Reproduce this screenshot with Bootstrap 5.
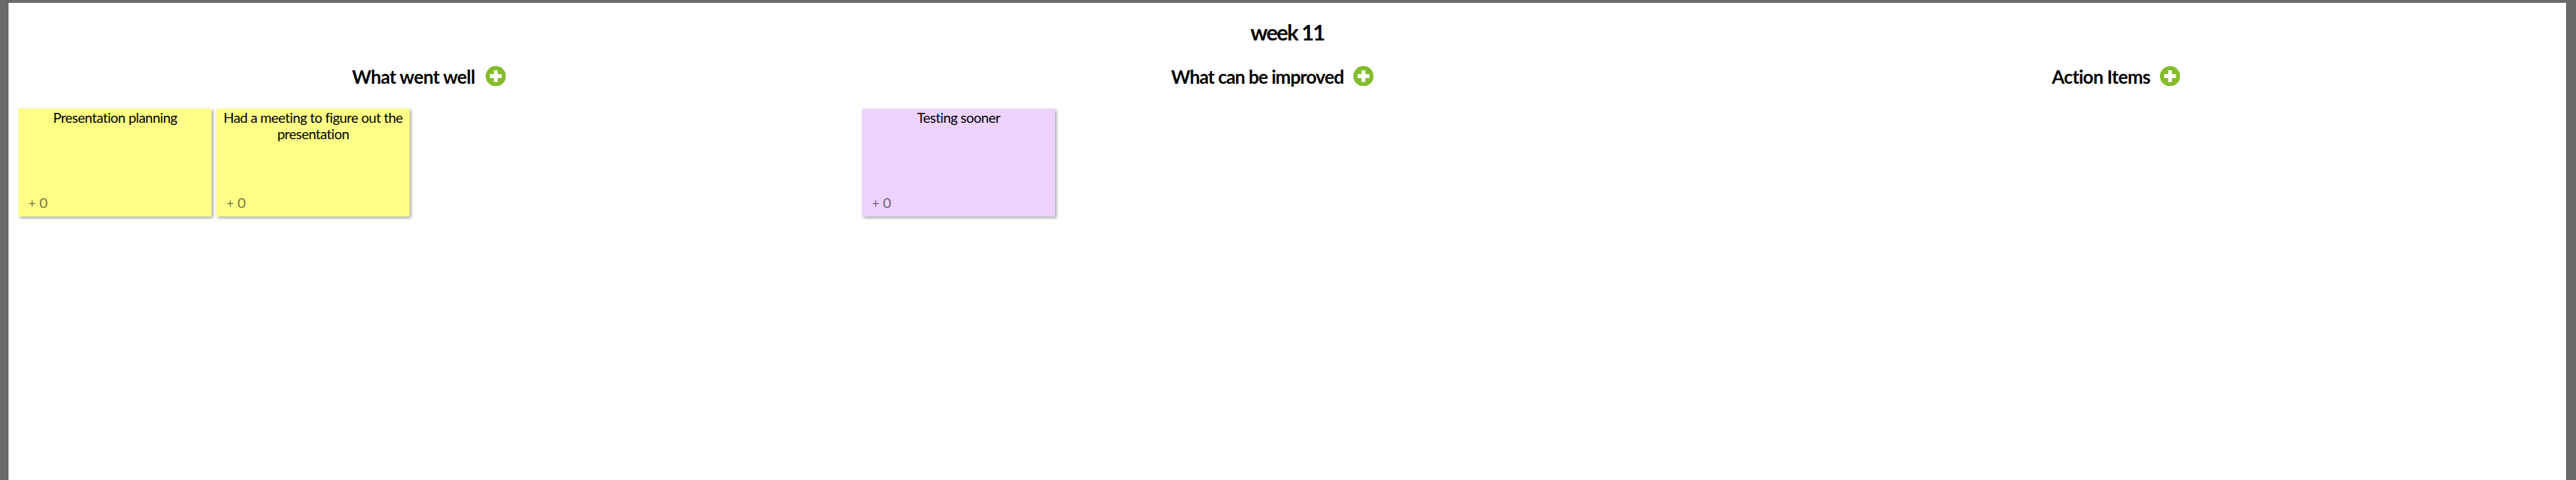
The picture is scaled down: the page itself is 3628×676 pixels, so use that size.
<!DOCTYPE html>
<html lang="en">
<head>
<meta charset="utf-8">
<title>week 11</title>
<link href="https://cdn.jsdelivr.net/npm/bootstrap@5.3.0/dist/css/bootstrap.min.css" rel="stylesheet">
<style>
body{background:#696969;font-family:Lato,"Open Sans",sans-serif;color:#000}
.board{height:676px;padding:4px 14px 0 12px}
.board-title{font-size:30.5px;font-weight:700;letter-spacing:-1.7px;line-height:36px;padding-top:23px;height:77px}
.lanes{padding-left:14px}
.lane{width:1188px}
.lane-head{height:52px;padding-right:32px;gap:14px;font-size:26px;font-weight:700;line-height:32px}
.lane-head h2{font:inherit;letter-spacing:-.66px;white-space:nowrap;padding-top:2px}
.name-well{width:174px}
.name-improve{width:243px}
.lane-head .name-improve{letter-spacing:-.92px}
.name-action{width:138px}
.add-btn svg{width:28.5px;height:28.5px}
.notes{gap:7px;padding-top:20px}
.note{width:272px;height:152px;box-shadow:2px 2px 4px rgba(0,0,0,.35);padding:1px 8px 6px 14px}
.note p{font-size:19.5px;line-height:23.4px;letter-spacing:-.53px;margin:0 -4px 0 -10px}
.note-yellow{background:#ffff88}
.note-purple{background:#edd3fd}
.vote{font-size:20px;line-height:25px;opacity:.55;gap:5px}
.vote .plus{font-size:18px}
</style>
</head>
<body>
<main class="board overflow-hidden">
<div class="bg-white h-100">
<h1 class="board-title text-center mb-0">week 11</h1>
<div class="lanes d-flex">
<section class="lane">
<header class="lane-head d-flex justify-content-center align-items-center">
<h2 class="name-well mb-0">What went well</h2>
<a class="add-btn d-flex" href="#" aria-label="Add"><svg viewBox="0 0 28 28"><circle cx="14" cy="14" r="14" fill="#84bd2b"/><path d="M14 5.8v16.4M5.8 14h16.4" stroke="#fff" stroke-width="5.2"/></svg></a>
</header>
<div class="notes d-flex">
<article class="note note-yellow d-flex flex-column justify-content-between text-center">
<p>Presentation planning</p>
<div class="vote d-flex align-items-baseline"><span class="plus">+</span><span>0</span></div>
</article>
<article class="note note-yellow d-flex flex-column justify-content-between text-center">
<p>Had a meeting to figure out the presentation</p>
<div class="vote d-flex align-items-baseline"><span class="plus">+</span><span>0</span></div>
</article>
</div>
</section>
<section class="lane">
<header class="lane-head d-flex justify-content-center align-items-center">
<h2 class="name-improve mb-0">What can be improved</h2>
<a class="add-btn d-flex" href="#" aria-label="Add"><svg viewBox="0 0 28 28"><circle cx="14" cy="14" r="14" fill="#84bd2b"/><path d="M14 5.8v16.4M5.8 14h16.4" stroke="#fff" stroke-width="5.2"/></svg></a>
</header>
<div class="notes d-flex">
<article class="note note-purple d-flex flex-column justify-content-between text-center">
<p>Testing sooner</p>
<div class="vote d-flex align-items-baseline"><span class="plus">+</span><span>0</span></div>
</article>
</div>
</section>
<section class="lane">
<header class="lane-head d-flex justify-content-center align-items-center">
<h2 class="name-action mb-0">Action Items</h2>
<a class="add-btn d-flex" href="#" aria-label="Add"><svg viewBox="0 0 28 28"><circle cx="14" cy="14" r="14" fill="#84bd2b"/><path d="M14 5.8v16.4M5.8 14h16.4" stroke="#fff" stroke-width="5.2"/></svg></a>
</header>
</section>
</div>
</div>
</main>
<script src="https://cdn.jsdelivr.net/npm/bootstrap@5.3.0/dist/js/bootstrap.bundle.min.js"></script>
</body>
</html>
